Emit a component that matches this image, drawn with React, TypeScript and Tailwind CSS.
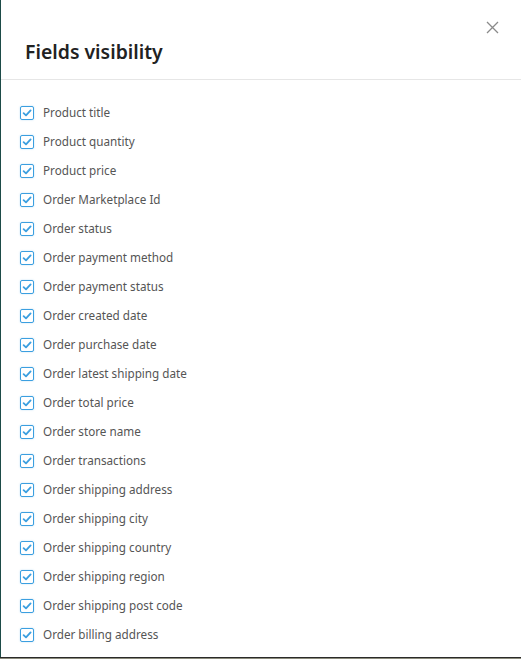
import React from "react";

const fields = [
  "Product title",
  "Product quantity",
  "Product price",
  "Order Marketplace Id",
  "Order status",
  "Order payment method",
  "Order payment status",
  "Order created date",
  "Order purchase date",
  "Order latest shipping date",
  "Order total price",
  "Order store name",
  "Order transactions",
  "Order shipping address",
  "Order shipping city",
  "Order shipping country",
  "Order shipping region",
  "Order shipping post code",
  "Order billing address",
];

function Check() {
  return (
    <span className="flex h-[14px] w-[14px] items-center justify-center rounded-[2px] border border-[#3b9fe0] bg-white shadow-[0_0_2px_rgba(59,159,224,0.35)]">
      <svg width="10" height="10" viewBox="0 0 10 10" fill="none">
        <path d="M1.6 5.2 L4 7.4 L8.6 2.4" stroke="#3b9fe0" strokeWidth="1.8" strokeLinecap="round" strokeLinejoin="round" />
      </svg>
    </span>
  );
}

export default function App() {
  return (
    <div className="flex h-[659px] w-[521px] flex-col bg-[#1d4b48]" style={{ fontFamily: '"Noto Sans", "Open Sans", sans-serif' }}>
      <div className="flex h-[657px] w-full pl-px">
        <div className="flex h-full w-full flex-col bg-white">
          <div className="relative flex h-[80px] items-center border-b border-[#e6e6e6] pl-[24px] pt-[24px]">
            <h1 className="text-[19.4px] font-semibold text-[#222]">Fields visibility</h1>
            <svg className="absolute right-[22px] top-[21px]" width="13" height="13" viewBox="0 0 13 13">
              <path d="M1 1 L12 12 M12 1 L1 12" stroke="#8a8a8a" strokeWidth="1.3" />
            </svg>
          </div>
          <div className="flex flex-col pl-[19px] pt-[18px]">
            {fields.map((f) => (
              <label key={f} className="flex h-[29px] items-center gap-[9px]">
                <Check />
                <span className="text-[11.7px] text-[#555]">{f}</span>
              </label>
            ))}
          </div>
        </div>
      </div>
      <div className="h-px w-full bg-[#2a2a2a]" />
      <div className="h-px w-full bg-[#8b8b7c]" />
    </div>
  );
}
